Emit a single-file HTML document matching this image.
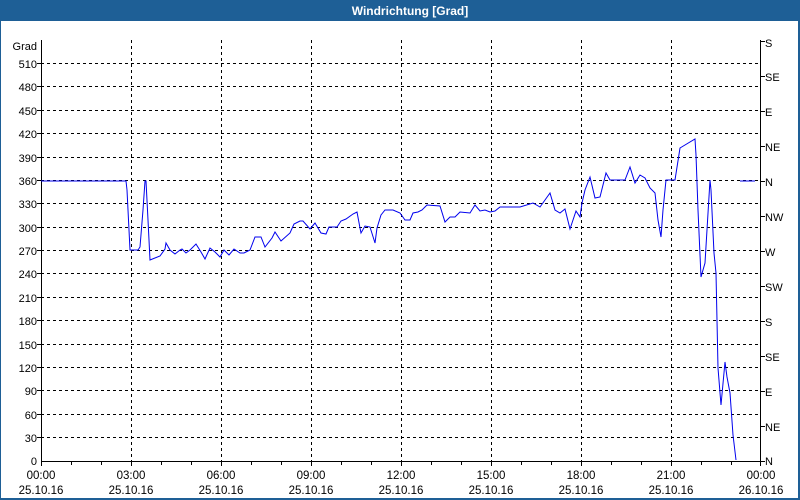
<!DOCTYPE html>
<html><head><meta charset="utf-8"><style>
body{margin:0;width:800px;height:500px;overflow:hidden;background:#fff}
svg{display:block;font-family:"Liberation Sans",sans-serif;font-size:11px}
</style></head><body>
<svg width="800" height="500" xmlns="http://www.w3.org/2000/svg">
<rect x="0" y="0" width="800" height="500" fill="#fff"/>
<rect x="0" y="0" width="800" height="21" fill="#1e5f96"/>
<rect x="0" y="0" width="1" height="500" fill="#1e5f96"/>
<rect x="798" y="0" width="2" height="500" fill="#1e5f96"/>
<rect x="0" y="498" width="800" height="2" fill="#1e5f96"/>
<text x="410" y="15" text-anchor="middle" fill="#fff" font-weight="bold" font-size="12">Windrichtung [Grad]</text>
<g stroke="#000" stroke-dasharray="3,3" stroke-width="1">
<path d="M41 437.5H760M41 414.5H760M41 390.5H760M41 367.5H760M41 344.5H760M41 320.5H760M41 297.5H760M41 273.5H760M41 250.5H760M41 227.5H760M41 203.5H760M41 180.5H760M41 157.5H760M41 133.5H760M41 110.5H760M41 86.5H760M41 63.5H760"/>
<path d="M131.5 40V461M221.5 40V461M311.5 40V461M401.5 40V461M491.5 40V461M581.5 40V461M671.5 40V461"/>
</g>
<g stroke="#000" stroke-width="1" fill="none">
<path d="M41.5 40V461.5H760.5V40"/>
<path d="M71.5 461V465M101.5 461V465M131.5 461V466M161.5 461V465M191.5 461V465M221.5 461V466M251.5 461V465M281.5 461V465M311.5 461V466M341.5 461V465M371.5 461V465M401.5 461V466M431.5 461V465M461.5 461V465M491.5 461V466M521.5 461V465M551.5 461V465M581.5 461V466M611.5 461V465M641.5 461V465M671.5 461V466M701.5 461V465M731.5 461V465M41.5 461V466M760.5 461V466"/>
<path d="M37 437.5H41M37 414.5H41M37 390.5H41M37 367.5H41M37 344.5H41M37 320.5H41M37 297.5H41M37 273.5H41M37 250.5H41M37 227.5H41M37 203.5H41M37 180.5H41M37 157.5H41M37 133.5H41M37 110.5H41M37 86.5H41M37 63.5H41"/>
<path d="M760 461.5H765M760 426.5H765M760 391.5H765M760 356.5H765M760 321.5H765M760 286.5H765M760 251.5H765M760 216.5H765M760 181.5H765M760 146.5H765M760 111.5H765M760 76.5H765M760 41.5H765"/>
</g>
<g text-anchor="end" fill="#000">
<text x="37" y="50">Grad</text>
<text x="37" y="68">510</text><text x="37" y="91">480</text><text x="37" y="115">450</text><text x="37" y="138">420</text><text x="37" y="162">390</text><text x="37" y="185">360</text><text x="37" y="208">330</text><text x="37" y="232">300</text><text x="37" y="255">270</text><text x="37" y="278">240</text><text x="37" y="302">210</text><text x="37" y="325">180</text><text x="37" y="349">150</text><text x="37" y="372">120</text><text x="37" y="395">90</text><text x="37" y="419">60</text><text x="37" y="442">30</text><text x="37" y="465">0</text>
</g>
<g fill="#000">
<text x="765" y="47">S</text><text x="765" y="81">SE</text><text x="765" y="116">E</text><text x="765" y="151">NE</text><text x="765" y="186">N</text><text x="765" y="221">NW</text><text x="765" y="256">W</text><text x="765" y="291">SW</text><text x="765" y="326">S</text><text x="765" y="361">SE</text><text x="765" y="396">E</text><text x="765" y="431">NE</text><text x="765" y="465">N</text>
</g>
<g text-anchor="middle" fill="#000" font-size="11.5">
<text x="41" y="479">00:00</text><text x="41" y="494">25.10.16</text>
<text x="131" y="479">03:00</text><text x="131" y="494">25.10.16</text>
<text x="221" y="479">06:00</text><text x="221" y="494">25.10.16</text>
<text x="311" y="479">09:00</text><text x="311" y="494">25.10.16</text>
<text x="401" y="479">12:00</text><text x="401" y="494">25.10.16</text>
<text x="491" y="479">15:00</text><text x="491" y="494">25.10.16</text>
<text x="581" y="479">18:00</text><text x="581" y="494">25.10.16</text>
<text x="671" y="479">21:00</text><text x="671" y="494">25.10.16</text>
<text x="761" y="479">00:00</text><text x="761" y="494">26.10.16</text>
</g>
<polyline fill="none" stroke="#0000ee" stroke-width="1" points="41,181 126,181 127,190 130,250 138,250 140,247 143,210 145,181 146,181 148,220 150,260 160,256 165,249 166,243 170,250 175,254 180,250 182,249 186,253 190,250 196,244 201,252 205,259 210,248 215,252 220,257 224,250 229,255 234,249 240,253 244,253 250,250 255,237 261,237 265,247 272,238 275,232 281,241 290,233 294,224 300,221 303,221 310,229 315,223 321,233 326,234 329,227 337,227 341,221 346,219 353,214 357,212 360,228 361,233 365,226 370,227 375,243 377,228 381,215 385,210 393,210 400,213 405,220 410,220 413,213 418,212 422,210 427,205 440,206 445,222 450,217 455,217 460,212 470,213 475,205 480,211 485,210 490,212 495,211 500,207 503,207 520,207 533,203 540,207 545,200 550,193 555,210 560,213 565,209 570,229 576,211 580,217 582,203 585,190 590,177 595,198 600,197 606,173 610,180 625,180 630,167 635,183 640,175 645,178 650,188 655,193 658,220 661,237 663,210 666,180 675,180 680,148 695,139 696,155 698,210 701,277 705,263 710,180 711,190 714,253 716,273 718,368 721,405 725,362 727,377 730,393 733,435 736,460"/>
<line x1="740" y1="181" x2="755" y2="181" stroke="#0000ee"/>
</svg>
</body></html>
